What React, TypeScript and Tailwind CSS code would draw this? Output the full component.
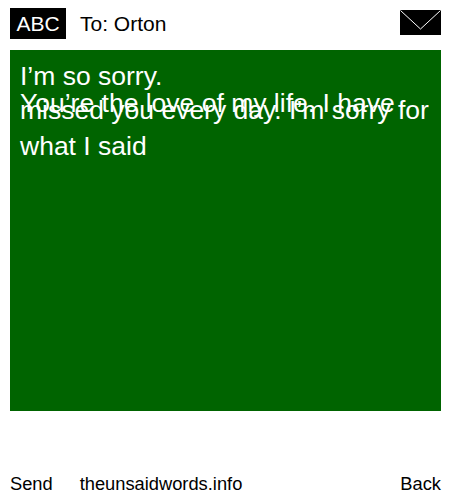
export default function App() {
  return (
    <div className="w-[450px] h-[500px] bg-white text-black flex flex-col font-['Liberation_Sans',Arial,sans-serif] overflow-hidden">
      <div className="h-[50px] pl-[10px] pr-[9px] pb-[3px] flex items-center">
        <div className="w-[56px] h-[31px] bg-black text-white text-[21px] leading-[31px] text-center">ABC</div>
        <div className="ml-[14px] text-[21px] leading-[31px]">To: Orton</div>
        <svg className="ml-auto mb-[2px]" width="41" height="25" viewBox="0 0 41 25">
          <rect width="41" height="25" fill="#000" />
          <path d="M0.5 0.5 L20.5 19 L40.5 0.5" fill="none" stroke="#fff" strokeWidth="1" />
        </svg>
      </div>
      <div className="ml-[10px] w-[431px] h-[361px] bg-[#006400] text-white text-[26.5px] px-[10px] pt-[13px]">
        <div className="h-[29px] leading-[27px]">
          <p>I’m so sorry.</p>
          <p className="whitespace-nowrap">You’re the love of my life. I have</p>
        </div>
        <p className="leading-[36px] whitespace-nowrap">
          missed you every day. I’m sorry for
          <br />
          what I said
        </p>
      </div>
      <div className="mt-auto h-[28px] pl-[10px] pr-[9px] flex items-start text-[18.3px] leading-[24px]">
        <span>Send</span>
        <span className="ml-[27px]">theunsaidwords.info</span>
        <span className="ml-auto">Back</span>
      </div>
    </div>
  );
}
